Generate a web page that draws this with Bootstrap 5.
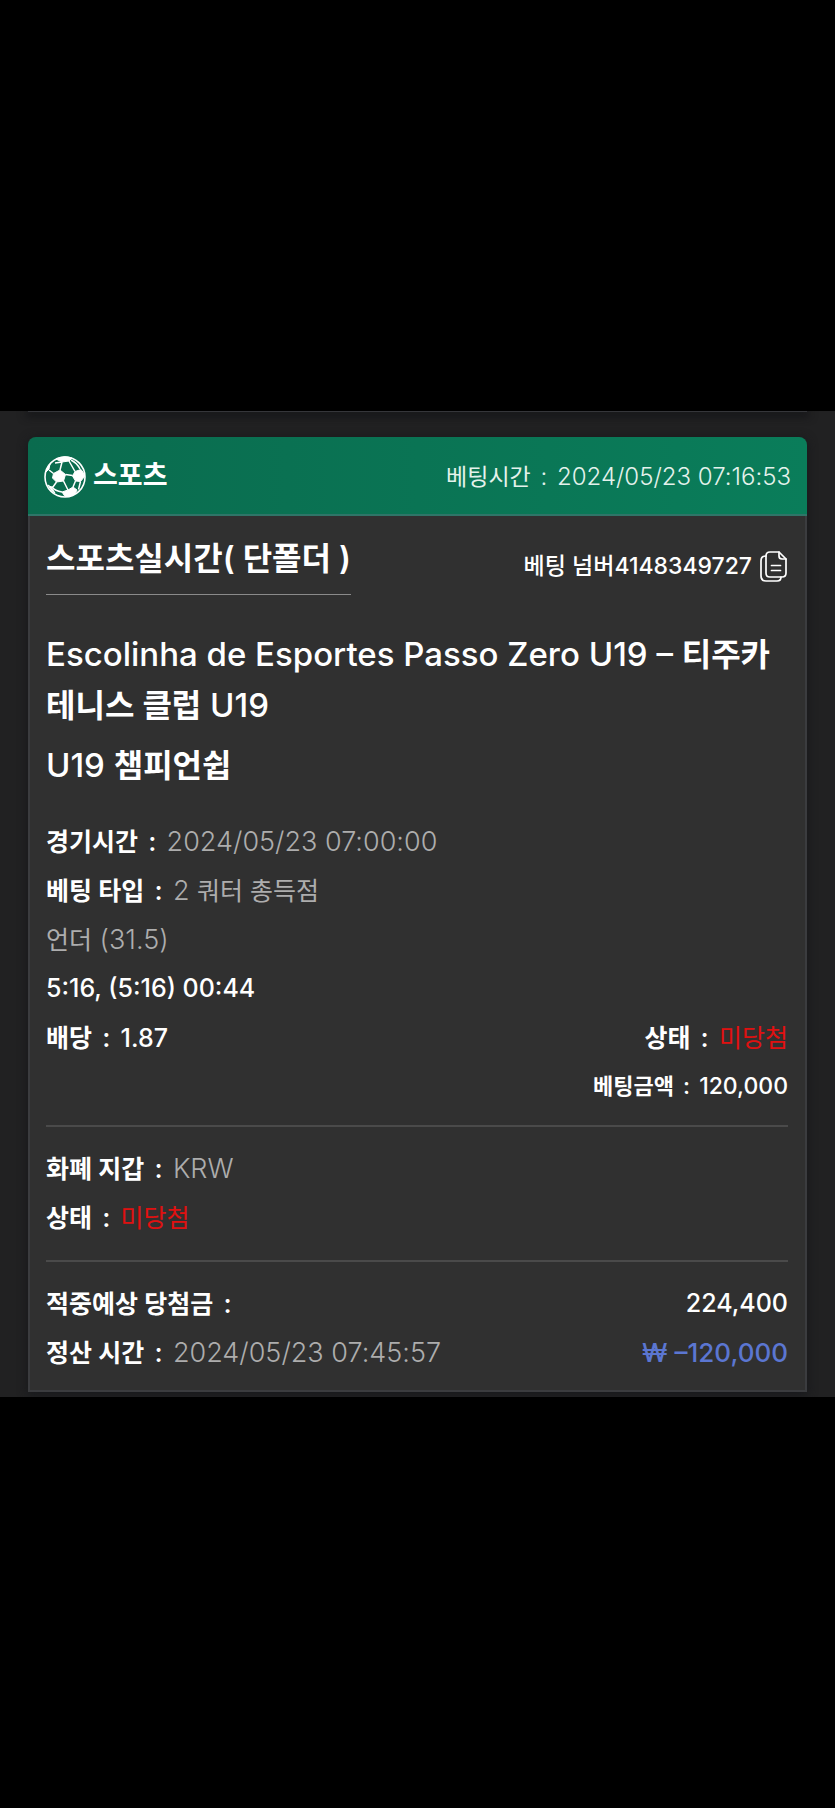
<!DOCTYPE html>
<html lang="ko">
<head>
<meta charset="utf-8">
<meta name="viewport" content="width=device-width, initial-scale=1">
<title>스포츠 베팅 내역</title>
<link href="https://cdn.jsdelivr.net/npm/bootstrap@5.3.0/dist/css/bootstrap.min.css" rel="stylesheet">
<style>
body{background:#000;color:#fff;font-family:Inter,"Noto Sans CJK KR",sans-serif;font-weight:500}
.stage{background:#212122;padding:0 28px 5px;overflow:hidden}
.prev-edge{height:1px;background:#35363a;box-shadow:0 2px 8px 2px #101114;margin-bottom:25px}
.slip{box-shadow:0 2px 10px 1px #18191c;border-radius:8px 8px 0 0}
.slip-head{height:79px;padding:2px 16px 0;border-bottom:2px solid #2f7568;border-radius:8px 8px 0 0;background:linear-gradient(90deg,#0a6b4e,#0a7d5a)}
.slip-body{background:#303030;border:2px solid #3b3c3f;border-top:0;padding:0 17px 13px 16px}
.sport{font-size:27px;font-weight:600;gap:7px}
.placed{font-size:24px;font-weight:300;color:#e4f2ec}
.placed .ko{font-size:23px;font-weight:400}
.ticket{font-size:23px;padding:33px 1px 0 0;gap:8px}
.ticket-row{height:79px}
.kind{font-size:32px;font-weight:600;line-height:46px;padding:20px 0 12px;border-bottom:1px solid #8a8a8a}
.copy{line-height:0;color:#fff}
.match{font-size:33px;line-height:51px;margin-top:34px}
.match .ko{font-size:32px;line-height:1;font-weight:600}
.league{margin-top:9px}
.lines{font-size:27px;padding-top:26px}
.lines .ko{font-size:25px}
.ko-label{font-weight:600}
.lines .amount{font-size:25px}
.lines .stake{font-size:23px}
.lines .stake .ko{font-size:22px}
.line-row{line-height:49px;height:49px}
.line-row span{line-height:1}
.sep{margin:0 3px}
.val{color:#adadad;font-weight:300}
.val .ko{font-weight:400}
.lost{color:#e01010;font-weight:400}
.loss{color:#5b76d1;font-size:26px}
.rule{height:2px;background:#4a4a4a;margin:14px 0 17px;border:0;opacity:1}
.rule-wide{margin-top:18px}
</style>
</head>
<body class="d-flex flex-column justify-content-center min-vh-100">
<main class="stage">
  <div class="prev-edge"></div>
  <article class="slip">
    <header class="slip-head d-flex align-items-center justify-content-between">
      <div class="sport d-flex align-items-center">
        <svg width="42" height="42" viewBox="0 0 42 42" aria-hidden="true">
          <circle cx="21" cy="21" r="20" fill="none" stroke="#fff" stroke-width="1.6"/>
          <g fill="#fff" stroke="#fff" stroke-width="1" stroke-linejoin="round">
            <path d="M9.500 17.500L16 14l5.500 4.500L19.500 25l-7 1-4-4z"/>
            <path d="M31 15.500l6-2q3 3 3.500 7l-4 5-5-.5-3-5z"/>
            <path d="M12 3q8-4 16-1l-3 3-7 1z"/>
            <path d="M18 36l6-2 5-3 4 3-2 4q-5 3-10 2.500z"/>
            <path d="M2 16q1-5 4-8l-1 5z"/>
            <path d="M4 29l3 2 4 6q-5-3-7-8z"/>
          </g>
          <path d="M16 14l2-8M21.500 18.500l7 1M19.500 25l4.500 9M12.500 26L9 31l-3 0M9.500 17.500L5 14M25 5l6 10.500M31.500 25l-2.500 6M18 6l-7 1M27 4q6 3 9 9M8 31q3 4 10 5M36.500 25.500l-2 8" fill="none" stroke="#fff" stroke-width="1.5"/>
        </svg>
        <span>스포츠</span>
      </div>
      <div class="placed"><span class="ko">베팅시간</span> <span class="sep">:</span> 2024/05/23 07:16:53</div>
    </header>
    <div class="slip-body">
      <div class="ticket-row d-flex justify-content-between align-items-start">
        <div class="kind">스포츠실시간( 단폴더 )</div>
        <div class="ticket d-flex align-items-center">
          <span>베팅 넘버4148349727</span>
          <button type="button" class="copy btn p-0 border-0" aria-label="복사">
            <svg width="27" height="31" viewBox="0 0 27 31" fill="none" stroke="currentColor" stroke-width="1.7" stroke-linejoin="round" stroke-linecap="round">
              <path d="M10 1h9l7 7v14q0 4-4 4H10q-4 0-4-4V5q0-4 4-4z"/>
              <path d="M19 1v4q0 3 3 3h4"/>
              <path d="M6 5q-5 0-5 5v15q0 5 5 5h11q4 0 4-4"/>
              <path d="M11.500 14.500h9M11.500 19.500h9"/>
            </svg>
          </button>
        </div>
      </div>
      <div class="match">Escolinha de Esportes Passo Zero U19 – <span class="ko">티주카</span> <span class="ko">테니스 클럽</span> U19</div>
      <div class="match league">U19 <span class="ko">챔피언쉽</span></div>
      <div class="lines">
        <div class="line-row"><span class="ko ko-label">경기시간</span> <span class="sep">:</span> <span class="val">2024/05/23 07:00:00</span></div>
        <div class="line-row"><span class="ko ko-label">베팅 타입</span> <span class="sep">:</span> <span class="val">2 <span class="ko">쿼터 총득점</span></span></div>
        <div class="line-row"><span class="val"><span class="ko">언더</span> (31.5)</span></div>
        <div class="line-row amount">5:16, (5:16) 00:44</div>
        <div class="line-row d-flex justify-content-between">
          <div><span class="ko ko-label">배당</span> <span class="sep">:</span> <span class="amount">1.87</span></div>
          <div><span class="ko ko-label">상태</span> <span class="sep">:</span> <span class="ko lost">미당첨</span></div>
        </div>
        <div class="line-row stake text-end"><span class="ko ko-label">베팅금액</span> <span class="sep">:</span> 120,000</div>
        <hr class="rule">
        <div class="line-row"><span class="ko ko-label">화폐 지갑</span> <span class="sep">:</span> <span class="val">KRW</span></div>
        <div class="line-row"><span class="ko ko-label">상태</span> <span class="sep">:</span> <span class="ko lost">미당첨</span></div>
        <hr class="rule rule-wide">
        <div class="line-row d-flex justify-content-between">
          <div><span class="ko ko-label">적중예상 당첨금</span> <span class="sep">:</span></div>
          <div class="amount">224,400</div>
        </div>
        <div class="line-row d-flex justify-content-between">
          <div><span class="ko ko-label">정산 시간</span> <span class="sep">:</span> <span class="val">2024/05/23 07:45:57</span></div>
          <div class="loss">₩ –120,000</div>
        </div>
      </div>
    </div>
  </article>
</main>
<script src="https://cdn.jsdelivr.net/npm/bootstrap@5.3.0/dist/js/bootstrap.bundle.min.js"></script>
</body>
</html>
